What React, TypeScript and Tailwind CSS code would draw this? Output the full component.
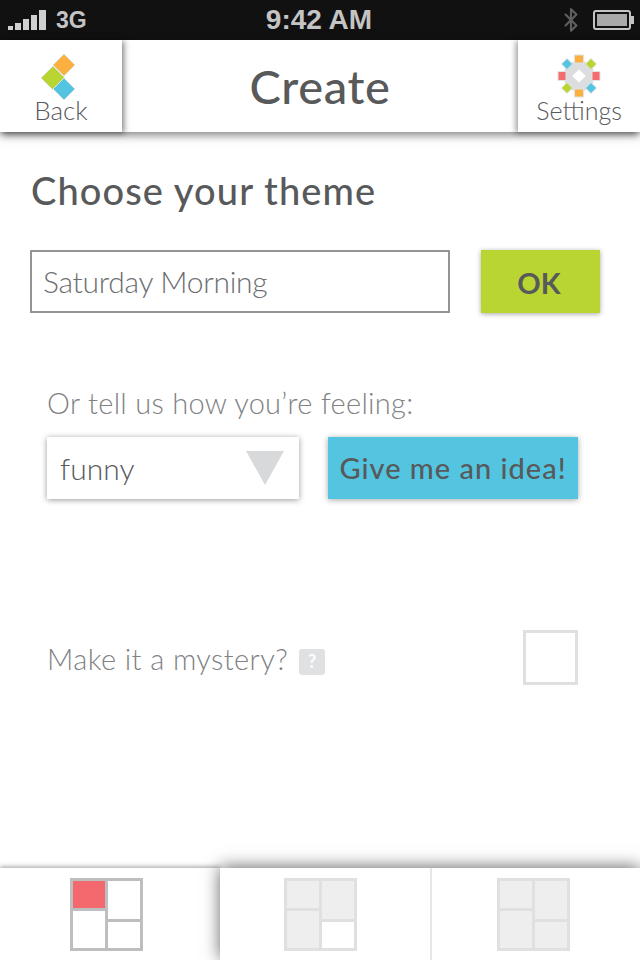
import { Bluetooth } from 'lucide-react'

const Diamond = ({ cx, cy, r, fill }: { cx: number; cy: number; r: number; fill: string }) => (
  <polygon
    points={`${cx},${cy - r} ${cx + r},${cy} ${cx},${cy + r} ${cx - r},${cy}`}
    fill={fill}
    stroke="#e2e3e5"
    strokeWidth="1"
  />
)

function BackLogo() {
  return (
    <svg width="40" height="50" viewBox="0 0 40 50" className="block">
      <Diamond cx={23} cy={13} r={11} fill="#fbb040" />
      <Diamond cx={12} cy={26} r={12} fill="#b9d532" />
      <Diamond cx={23} cy={37} r={11} fill="#54c5e0" />
    </svg>
  )
}

function SettingsLogo() {
  return (
    <svg width="44" height="44" viewBox="0 0 44 44" className="block">
      <circle cx="22" cy="22" r="15.5" fill="#dcddde" />
      <Diamond cx={22} cy={22} r={7} fill="#ffffff" />
      <rect x="17.5" y="1" width="9" height="8" fill="#fbb040" stroke="#e2e3e5" />
      <rect x="17.5" y="35" width="9" height="8" fill="#fbb040" stroke="#e2e3e5" />
      <rect x="1" y="17.5" width="8" height="9" fill="#f26d6f" stroke="#e2e3e5" />
      <rect x="35" y="17.5" width="8" height="9" fill="#f26d6f" stroke="#e2e3e5" />
      <Diamond cx={10} cy={10} r={5.5} fill="#54c5e0" />
      <Diamond cx={34} cy={10} r={5.5} fill="#b9d532" />
      <Diamond cx={10} cy={34} r={5.5} fill="#b9d532" />
      <Diamond cx={34} cy={34} r={5.5} fill="#54c5e0" />
    </svg>
  )
}

// 2x2 tile icon in the tab bar, fills = [top left, bottom left, top right, bottom right]
function TileIcon({ frame, fills }: { frame: string; fills: string[] }) {
  return (
    <svg width="73" height="73" viewBox="0 0 73 73" className="block">
      <rect width="73" height="73" fill={frame} />
      <rect x="3" y="3" width="32" height="27" fill={fills[0]} />
      <rect x="3" y="33" width="32" height="37" fill={fills[1]} />
      <rect x="38" y="3" width="32" height="38" fill={fills[2]} />
      <rect x="38" y="44" width="32" height="26" fill={fills[3]} />
    </svg>
  )
}

function StatusBar() {
  return (
    <div className="h-10 bg-[#111112] text-[#c4c4c4] flex items-center justify-between pl-2 pr-1.5 font-['Liberation_Sans',sans-serif] font-bold relative z-0">
      <div className="flex items-center gap-[10px] w-[198px]">
        <div className="flex items-end gap-[2px] h-[20px]">
          <span className="w-[5px] h-[4px] bg-[#d0d0d0]" />
          <span className="w-[6px] h-[7px] bg-[#d0d0d0]" />
          <span className="w-[6px] h-[11px] bg-[#d0d0d0]" />
          <span className="w-[6px] h-[15px] bg-[#d0d0d0]" />
          <span className="w-[7px] h-[20px] bg-[#d0d0d0]" />
        </div>
        <span className="text-[23px] leading-none">3G</span>
      </div>
      <span className="text-[28px] leading-none">9:42 AM</span>
      <div className="flex items-center justify-end gap-[9px] w-[202px]">
        <Bluetooth size={26} strokeWidth={2} className="text-[#5f5f5f]" />
        <div className="flex items-center">
          <div className="w-[38px] h-[20px] border-2 border-[#c4c4c4] rounded-[3px] p-[2px]">
            <div className="w-full h-full bg-[#a9a9a9]" />
          </div>
          <span className="w-[3px] h-[8px] bg-[#c4c4c4]" />
        </div>
      </div>
    </div>
  )
}

function Header() {
  return (
    <div className="h-[92px] flex bg-white relative z-10 shadow-[0_3px_9px_rgba(0,0,0,0.5)]">
      <div className="w-[122px] flex flex-col items-center pt-[12px] shadow-[2px_1px_6px_rgba(0,0,0,0.5)]">
        <BackLogo />
        <span className="text-[26px] leading-none mt-[-5px] font-light text-[#58595b]">Back</span>
      </div>
      <h1 className="flex-1 text-center text-[47px] leading-[92px] font-medium tracking-[0.6px] text-[#58595b]">Create</h1>
      <div className="w-[122px] flex flex-col items-center pt-[14px] shadow-[-2px_1px_6px_rgba(0,0,0,0.4)]">
        <SettingsLogo />
        <span className="text-[25px] leading-none font-light text-[#58595b]">Settings</span>
      </div>
    </div>
  )
}

function TabBar() {
  return (
    <div className="h-[92px] flex bg-white">
      <div className="w-[220px] flex justify-start pl-[70px] pt-[10px] shadow-[0_-1px_5px_rgba(0,0,0,0.4)]">
        <TileIcon frame="#bcbec0" fills={['#f4696e', '#ffffff', '#ffffff', '#ffffff']} />
      </div>
      <div className="flex-1 flex bg-white relative shadow-[0_-1px_16px_rgba(0,0,0,0.6)]">
        <div className="w-[212px] border-r-2 border-[#e6e7e8] flex justify-start pl-[64px] pt-[10px]">
          <TileIcon frame="#dfe0e2" fills={['#eeeeef', '#eeeeef', '#eeeeef', '#ffffff']} />
        </div>
        <div className="flex-1 flex justify-start pl-[65px] pt-[10px]">
          <TileIcon frame="#dfe0e2" fills={['#eeeeef', '#eeeeef', '#eeeeef', '#eeeeef']} />
        </div>
      </div>
    </div>
  )
}

export default function App() {
  return (
    <div className="w-[640px] h-[960px] bg-white flex flex-col overflow-hidden font-['Lato',sans-serif]">
      <StatusBar />
      <Header />

      <main className="flex-1 relative">
        <h2 className="pl-[31px] pt-[34px] text-[38px] leading-[48px] font-medium tracking-[1.1px] text-[#58595b]">
          Choose your theme
        </h2>

        <div className="flex items-stretch pl-[30px] mt-[36px] gap-[31px]">
          <div className="w-[420px] h-[63px] border-2 border-[#949494] pl-[11px] flex items-center text-[30px] font-light tracking-[-0.3px] text-[#6d6e71]">
            Saturday Morning
          </div>
          <button className="w-[119px] h-[63px] bg-[#b9d532] pr-[3px] pt-[2px] text-[29px] font-bold text-[#58595b] shadow-[0_1px_5px_rgba(0,0,0,0.35)]">
            OK
          </button>
        </div>

        <p className="pl-[47px] mt-[68px] text-[29px] leading-[44px] font-light tracking-[0.3px] text-[#808285]">
          Or tell us how you’re feeling:
        </p>

        <div className="flex pl-[47px] mt-[12px] gap-[29px]">
          <div className="w-[252px] h-[62px] pl-[13px] pr-[15px] flex items-center justify-between text-[30px] font-light text-[#58595b] bg-white shadow-[0_1px_6px_rgba(0,0,0,0.4)]">
            funny
            <svg width="38" height="34" viewBox="0 0 38 34">
              <polygon points="0,0 38,0 19,34" fill="#d8d9db" />
            </svg>
          </div>
          <button className="w-[250px] h-[62px] bg-[#54c5e0] text-[29px] font-medium tracking-[1px] text-[#58595b] whitespace-nowrap shadow-[0_1px_6px_rgba(0,0,0,0.35)]">
            Give me an idea!
          </button>
        </div>

        <div className="flex items-center pl-[47px] mt-[131px]">
          <span className="mt-[2px] text-[29px] font-light tracking-[0.4px] text-[#808285]">Make it a mystery?</span>
          <span className="ml-[11px] mt-[8px] w-[26px] h-[26px] rounded-[3px] bg-[#e0e1e3] text-white text-[18px] font-bold flex items-center justify-center">
            ?
          </span>
          <div className="ml-auto mr-[62px] w-[55px] h-[55px] border-[3px] border-[#dfe0e2]" />
        </div>
      </main>

      <TabBar />
    </div>
  )
}
